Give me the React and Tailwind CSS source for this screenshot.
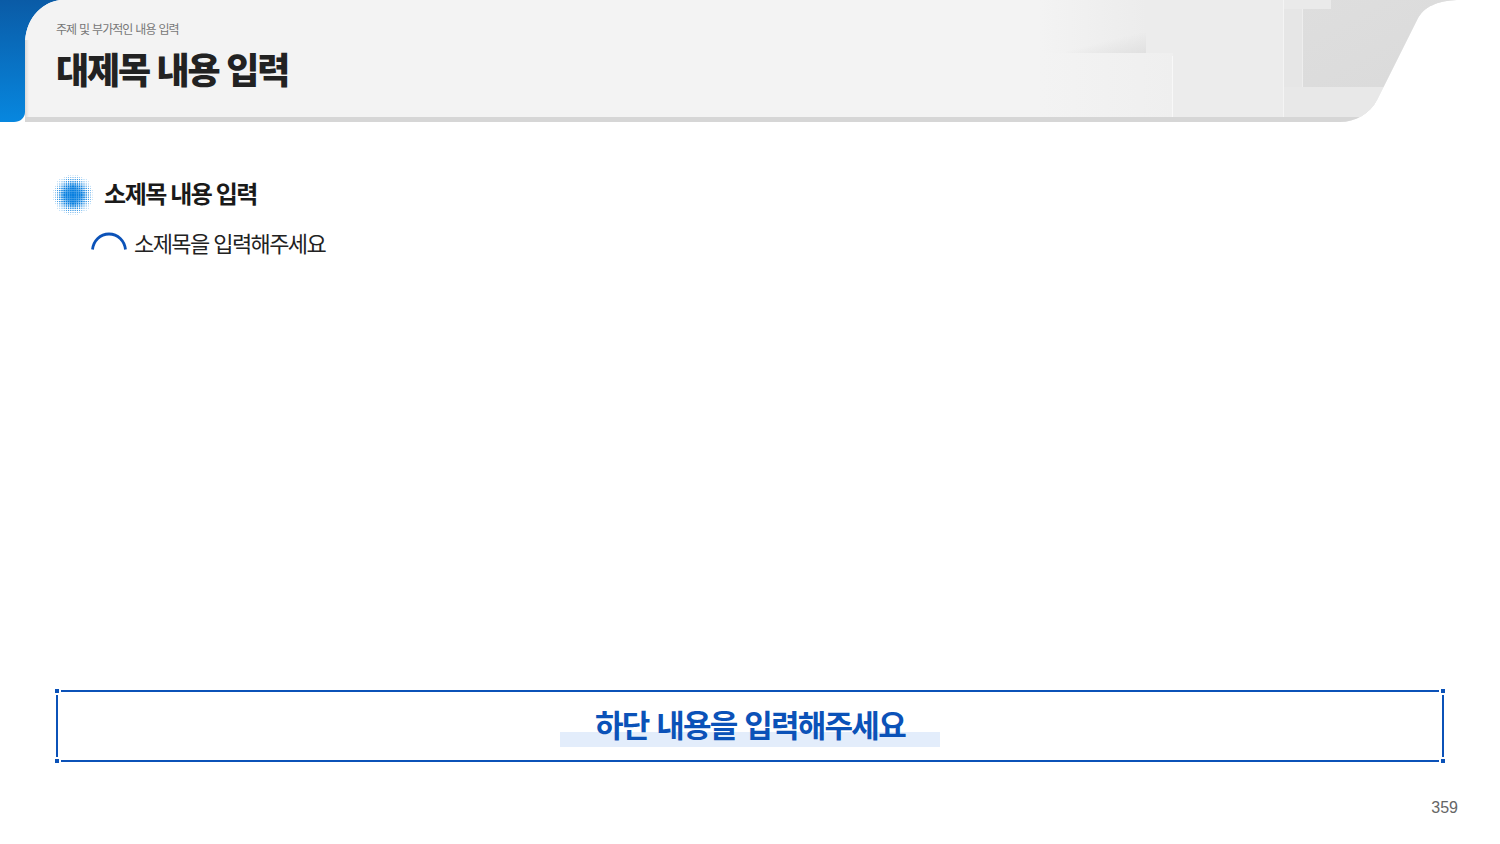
import React from 'react';

const FONT = "font-['Inter','Noto_Sans_CJK_KR',sans-serif]";

// halftone blob next to the section title
const HalftoneDot = () => {
  const dots = [];
  for (let y = -9; y <= 9; y++) {
    for (let x = -9; x <= 9; x++) {
      const d = Math.sqrt(x * x + y * y) * 2.2;
      if (d > 20.5) continue;
      const s = d < 7 ? 2.2 : Math.max(0.5, 2.2 - (d - 7) / 7.5);
      dots.push(<rect key={`${x}-${y}`} x={20 + x * 2.2 - s / 2} y={20 + y * 2.2 - s / 2} width={s} height={s} fill="#0a80e0" />);
    }
  }
  return (
    <svg width="40" height="40" viewBox="0 0 40 40" className="shrink-0">
      {dots}
    </svg>
  );
};

const HeaderArt = () => (
  <svg className="absolute inset-0" width="1500" height="122" viewBox="0 0 1500 122">
    <defs>
      <linearGradient id="blue" x1="0" y1="0" x2="0" y2="1">
        <stop offset="0" stopColor="#0a5ba6" />
        <stop offset="1" stopColor="#0787df" />
      </linearGradient>
      <linearGradient id="fadeTop" x1="0" y1="0" x2="1" y2="0">
        <stop offset="0" stopColor="#f3f3f3" />
        <stop offset="1" stopColor="#ececec" />
      </linearGradient>
      <linearGradient id="fadeLow" x1="0" y1="0" x2="1" y2="0">
        <stop offset="0" stopColor="#f3f3f3" />
        <stop offset="1" stopColor="#efefef" />
      </linearGradient>
      <linearGradient id="shade" x1="0" y1="0" x2="1" y2="1">
        <stop offset="0.45" stopColor="#dfdfdf" stopOpacity="0" />
        <stop offset="1" stopColor="#dfdfdf" stopOpacity="0.9" />
      </linearGradient>
      <linearGradient id="dark" x1="0" y1="0" x2="1" y2="1">
        <stop offset="0" stopColor="#dedede" />
        <stop offset="1" stopColor="#dadada" />
      </linearGradient>
      <linearGradient id="edge" x1="0" y1="0" x2="1" y2="0">
        <stop offset="0" stopColor="#c8c8c8" />
        <stop offset="1" stopColor="#f3f3f3" />
      </linearGradient>
      <clipPath id="panel">
        <path d="M60 0H1457C1438 1 1424 6 1417 20L1377 100C1370 114 1355 122 1340 122H25V45C25 20 40 3 60 0Z" />
      </clipPath>
    </defs>
    <path d="M0 0H60C40 3 25 20 25 45V112C25 118 20 122 14 122H0Z" fill="url(#blue)" />
    <path d="M60 0H1457C1438 1 1424 6 1417 20L1377 100C1370 114 1355 122 1340 122H25V45C25 20 40 3 60 0Z" fill="#f3f3f3" />
    <g clipPath="url(#panel)">
      <rect x="1040" y="0" width="106" height="53" fill="url(#fadeTop)" />
      <rect x="1066" y="33" width="80" height="20" fill="url(#shade)" />
      <rect x="1146" y="0" width="137" height="117" fill="#ececec" />
      <rect x="1040" y="53" width="133" height="64" fill="url(#fadeLow)" />
      <rect x="1172" y="56" width="1" height="61" fill="#f8f8f8" />
      <rect x="1283" y="0" width="180" height="117" fill="#e6e6e6" />
      <rect x="1303" y="0" width="160" height="87" fill="url(#dark)" />
      <rect x="1283" y="0" width="48" height="9" fill="#eaeaea" />
      <rect x="1283" y="87" width="120" height="30" fill="#e8e8e8" />
      <rect x="1283" y="0" width="1" height="117" fill="#f4f4f4" />
      <rect x="1302" y="9" width="1" height="78" fill="#eeeeee" />
      <rect x="0" y="117" width="1500" height="5" fill="#d6d6d6" />
    </g>
    <rect x="25" y="40" width="4" height="77" fill="url(#edge)" opacity="0.6" />
  </svg>
);

const Corner = ({ className }) => (
  <span className={`absolute w-[4px] h-[4px] bg-[#0b52b8] ring-2 ring-white ${className}`} />
);

const App = () => {
  return (
    <div className={`w-[1500px] h-[844px] bg-white overflow-hidden flex flex-col ${FONT}`}>
      {/* header */}
      <header className="relative h-[122px] shrink-0 pl-[56px] pt-[21px]">
        <HeaderArt />
        <div className="relative">
          <p className="text-[12px] leading-[18px] tracking-[-0.08em] [word-spacing:0.5px] text-[#777777]">주제 및 부가적인 내용 입력</p>
          <h1 className="mt-[4px] text-[36px] leading-[56px] font-extrabold tracking-[-0.06em] [word-spacing:2px] text-[#222222]">대제목 내용 입력</h1>
        </div>
      </header>

      {/* section */}
      <main className="flex-1 flex flex-col pl-[53px] pt-[53px]">
        <div className="flex items-center gap-[11px] h-[40px]">
          <HalftoneDot />
          <h2 className="text-[24px] leading-[40px] font-bold tracking-[-0.06em] text-[#1a1a1a]">소제목 내용 입력</h2>
        </div>
        <div className="flex items-center gap-[7px] mt-[14px] ml-[38px] h-[30px]">
          <svg width="36" height="18" viewBox="0 0 36 18" className="shrink-0 -mt-[6px]">
            <path d="M1.5 17.5C2.5 9 9 2 18 2S33.5 9 34.5 17.5" fill="none" stroke="#0b52b8" strokeWidth="2.8" />
          </svg>
          <p className="text-[22px] leading-[30px] tracking-[-0.072em] text-[#222222]">소제목을 입력해주세요</p>
        </div>
      </main>

      {/* bottom callout */}
      <section className="relative mx-[56px] h-[72px] shrink-0 border-2 border-[#0b52b8] flex items-center justify-center">
        <Corner className="-left-[3px] -top-[3px]" />
        <Corner className="-right-[3px] -top-[3px]" />
        <Corner className="-left-[3px] -bottom-[3px]" />
        <Corner className="-right-[3px] -bottom-[3px]" />
        <div className="relative w-[380px] h-[44px] flex justify-center">
          <span className="absolute left-0 right-0 bottom-[1px] h-[15px] bg-[#e3edfb]" />
          <p className="relative text-[31px] leading-[44px] font-bold tracking-[-0.056em] [word-spacing:2px] text-[#0b52b8]">하단 내용을 입력해주세요</p>
        </div>
      </section>

      {/* page number */}
      <footer className="h-[82px] shrink-0 flex justify-end pr-[42px] pt-[34px]">
        <span className="font-['Liberation_Sans',sans-serif] text-[16px] leading-[24px] text-[#666666]">359</span>
      </footer>
    </div>
  );
};

export default App;
